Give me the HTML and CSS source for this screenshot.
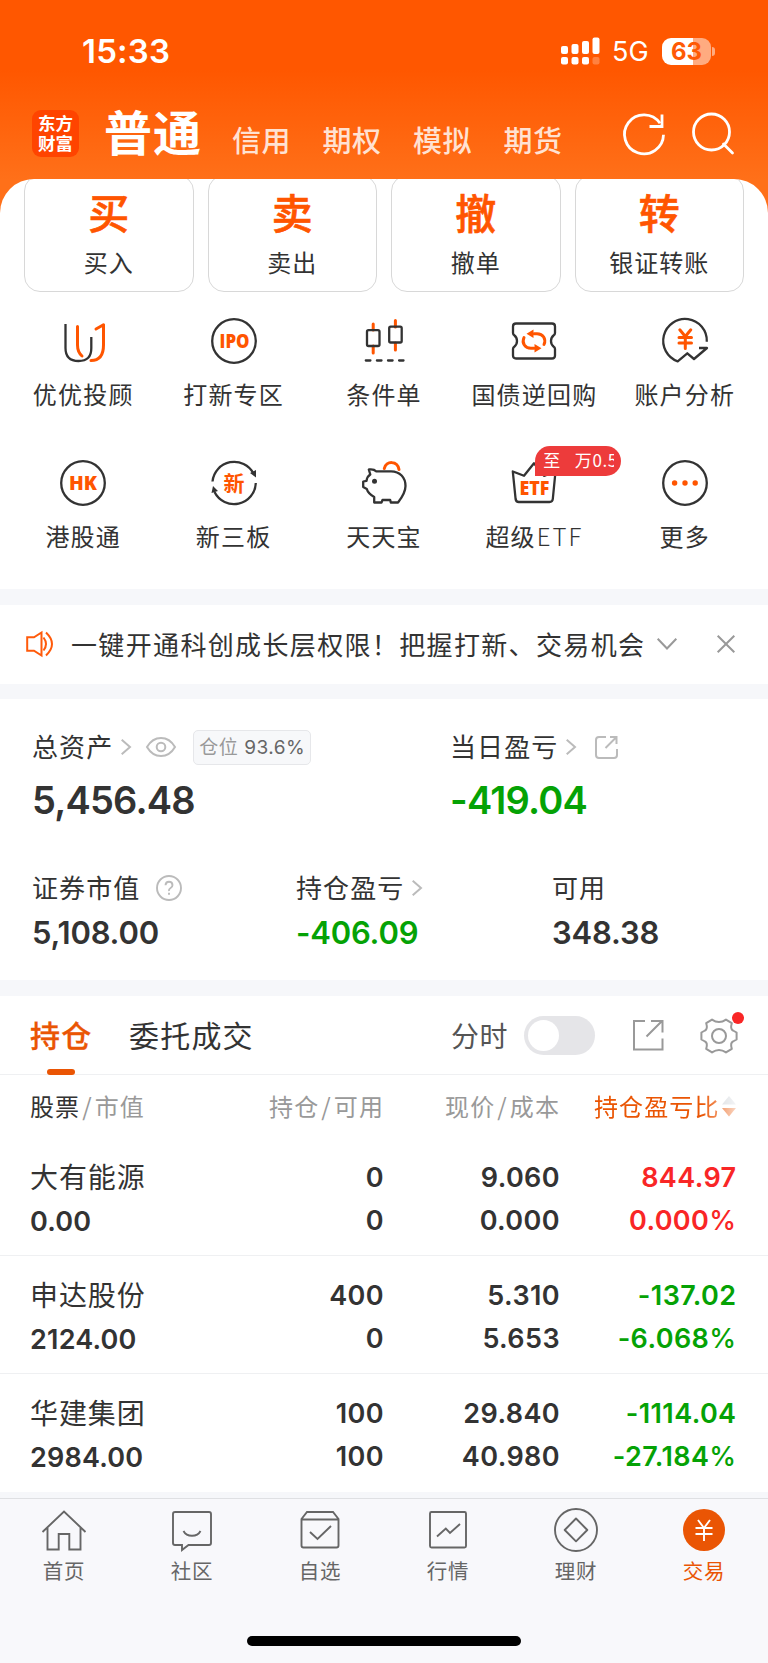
FILE: index.html
```
<!DOCTYPE html>
<html lang="zh-CN">
    <head>
        <meta charset="UTF-8">
        <title>交易</title>
        <link rel="stylesheet" href="styles.css">
    </head>
    <body>
        <header>
            <div class="status">
                <span class="time">15:33</span>
                <svg class="signal" width="39" height="28" fill="#fff">
                    <rect x="0" y="9" width="7" height="8" rx="2"/>
                    <rect x="10.5" y="7" width="7" height="10" rx="2"/>
                    <rect x="21" y="4" width="7" height="13" rx="2"/>
                    <rect x="31.5" y="0.5" width="7" height="16.5" rx="2"/>
                    <rect x="0" y="20" width="7" height="7.5" rx="2"/>
                    <rect x="10.5" y="20" width="7" height="7.5" rx="2"/>
                    <rect x="21" y="20" width="7" height="7.5" rx="2"/>
                    <rect x="31.5" y="20" width="7" height="7.5" rx="2" opacity="0.25"/>
                </svg>
                <span class="net">5G</span>
                <span class="battery">63</span>
                <span class="battery-tip"></span>
            </div>
            <div class="topbar">
                <div class="logo">东方<br>财富</div>
                <nav class="accounts">
                    <b>普通</b>
                    <span>信用</span>
                    <span>期权</span>
                    <span>模拟</span>
                    <span>期货</span>
                </nav>
                <svg class="refresh" width="44" height="44" fill="none" stroke="#fff" stroke-width="2.8">
                    <path d="M41.5 22.8A19.5 19.5 0 1 1 38 11.2"/>
                    <path d="M40 2.5V14.5H27.5"/>
                </svg>
                <svg class="search" width="44" height="44" fill="none" stroke="#fff" stroke-width="2.8">
                    <circle cx="20.5" cy="20" r="18"/>
                    <path d="M32.5 32L41.5 41" stroke-linecap="round"/>
                </svg>
            </div>
        </header>

        <main>
            <section class="panel">
                <div class="cards">
                    <div class="card"><b>买</b><span>买入</span></div>
                    <div class="card"><b>卖</b><span>卖出</span></div>
                    <div class="card"><b>撤</b><span>撤单</span></div>
                    <div class="card"><b>转</b><span>银证转账</span></div>
                </div>
                <div class="quick">
                    <div class="item">
                        <svg class="ico" viewBox="0 0 48 48">
                            <path d="M6.5 7V31Q6.5 44 19.5 44T32.3 31V20"/>
                            <path class="o" d="M18.5 9.5V28Q18.5 35 23 39"/>
                            <path class="o" d="M37 12L44.5 7.8V28Q44.5 43.5 32 43.5"/>
                        </svg>
                        <span>优优投顾</span>
                    </div>
                    <div class="item">
                        <svg class="ico" viewBox="0 0 48 48">
                            <circle cx="24" cy="24" r="21.8"/>
                            <text x="9.5" y="31.3" textLength="30" lengthAdjust="spacingAndGlyphs">IPO</text>
                        </svg>
                        <span>打新专区</span>
                    </div>
                    <div class="item">
                        <svg class="ico" viewBox="0 0 48 48">
                            <path class="o" d="M13.2 7V13M13.2 29V36M35.4 3.5V10M35.4 26V33"/>
                            <rect x="7" y="13.2" width="12.5" height="15.8" rx="1.5"/>
                            <rect x="29.2" y="9.7" width="12.5" height="15.8" rx="1.5"/>
                            <path d="M5.8 43.5H43.5" stroke-dasharray="4.6 6.5" stroke-linecap="round"/>
                        </svg>
                        <span>条件单</span>
                    </div>
                    <div class="item">
                        <svg class="ico" viewBox="0 0 48 48">
                            <path d="M6 6.5H42Q45 6.5 45 9.5V16Q45 17.5 43.5 18.5Q41 20.5 41 24T43.5 29.5Q45 30.5 45 32V38.5Q45 41.5 42 41.5H6Q3 41.5 3 38.5V32Q3 30.5 4.5 29.5Q7 27.5 7 24T4.5 18.5Q3 17.5 3 16V9.5Q3 6.5 6 6.5Z"/>
                            <path class="o" d="M14 20.5C11.5 26 15 31.3 21 31.3H24M34 27.5C36.5 22 33 16.7 27 16.7H24"/>
                            <path class="fill-o" d="M24.5 27L31.5 31.3L24.5 35.5ZM23.5 12.5L16.5 16.7L23.5 21Z"/>
                        </svg>
                        <span>国债逆回购</span>
                    </div>
                    <div class="item">
                        <svg class="ico" viewBox="0 0 48 48">
                            <path d="M45.8 24.7A21.8 21.8 0 1 0 16.7 44.3L26.3 36.3L33 42L46 31H38"/>
                            <path class="o" d="M18.8 12.8L24.3 19.5L29.8 12.8M18 20.5H30.5M18 26H30.5M24.3 20V31.5"/>
                        </svg>
                        <span>账户分析</span>
                    </div>
                    <div class="item">
                        <svg class="ico" viewBox="0 0 48 48">
                            <circle cx="24" cy="24" r="21.8"/>
                            <text x="10" y="31.3" textLength="28" lengthAdjust="spacingAndGlyphs">HK</text>
                        </svg>
                        <span>港股通</span>
                    </div>
                    <div class="item">
                        <svg class="ico" viewBox="0 0 48 48">
                            <path d="M2.5 22.5A21.8 21.8 0 0 1 43.5 14.5M45.8 24A21.8 21.8 0 0 1 4.5 33"/>
                            <path class="fill-d" d="M40 14L46 11V18.5ZM1.5 34L3 27L8 32Z"/>
                            <text x="13.5" y="32" class="cn">新</text>
                        </svg>
                        <span>新三板</span>
                    </div>
                    <div class="item">
                        <svg class="ico" viewBox="0 0 48 48">
                            <path class="o" d="M24.3 9.5C26 1.5 37.5 1.5 39 10.5"/>
                            <path d="M8.8 10.5Q14 9.8 16 12.3H31C40 12.3 45.5 18.5 45.5 27C45.5 34 41.5 39 38 43.5H30.8L30.2 41H22.5L21.5 43.5H14.2V38Q8 34.5 6.8 30L3.2 28V22.5L6.5 21.8Q7 17.5 10.3 15.5Z"/>
                            <circle class="fill-d" cx="14.5" cy="22.3" r="2.5"/>
                        </svg>
                        <span>天天宝</span>
                    </div>
                    <div class="item">
                        <svg class="ico" viewBox="0 0 48 48">
                            <path d="M2.8 12.5L14 16.8L24 4.3L34 16.8L45.5 12.5L42.8 40Q42.5 43 39.5 43H8.8Q6 43 5.6 40Z"/>
                            <text x="9.5" y="35.6" textLength="30" lengthAdjust="spacingAndGlyphs">ETF</text>
                        </svg>
                        <span>超级<i>ETF</i></span>
                        <div class="tip"><p><i>至</i>万0.5</p></div>
                    </div>
                    <div class="item">
                        <svg class="ico" viewBox="0 0 48 48">
                            <circle cx="24" cy="24" r="21.8"/>
                            <circle class="fill-o" cx="13.6" cy="24" r="2.7"/>
                            <circle class="fill-o" cx="24" cy="24" r="2.7"/>
                            <circle class="fill-o" cx="34.2" cy="24" r="2.7"/>
                        </svg>
                        <span>更多</span>
                    </div>
                </div>
            </section>

            <section class="notice">
                <svg width="28" height="26" fill="none" stroke="#ff5a0a" stroke-width="2">
                    <path d="M1.2 6.3H8L15.5 1.5V24.5L8 19.7H1.2Z"/>
                    <path d="M17.5 6.5Q22.5 13 17.5 19.5M20 1.5Q32 13 20 24.5"/>
                </svg>
                <p>一键开通科创成长层权限！把握打新、交易机会</p>
                <svg class="down" width="20" height="12" fill="none" stroke="#999" stroke-width="2"><path d="M0.7 0.7L10 10.5L19.3 0.7"/></svg>
                <svg class="close" width="18" height="18" fill="none" stroke="#999" stroke-width="2"><path d="M0.7 0.7L17.3 17.3M17.3 0.7L0.7 17.3"/></svg>
            </section>

            <section class="assets">
                <div class="total">
                    <div>
                        <div class="label">
                            总资产
                            <svg class="arrow" viewBox="0 0 10 16"><path d="M0.7 0.7L9 8L0.7 15.3"/></svg>
                            <svg class="eye" width="30" height="20" fill="none" stroke="#bbb" stroke-width="2">
                                <path d="M1 10C8-2 22-2 29 10C22 22 8 22 1 10Z"/>
                                <circle cx="15" cy="10" r="4.3"/>
                            </svg>
                            <span class="ratio">仓位 <i>93.6%</i></span>
                        </div>
                        <div class="big">5,456.48</div>
                    </div>
                    <div>
                        <div class="label">
                            当日盈亏
                            <svg class="arrow" viewBox="0 0 10 16"><path d="M0.7 0.7L9 8L0.7 15.3"/></svg>
                            <svg class="share" width="24" height="24" fill="none" stroke="#bbb" stroke-width="2">
                                <path d="M12 2H5Q2 2 2 5V20Q2 23 5 23H20Q23 23 23 20V14M11.5 13L22.5 2M16 2H22.5V9"/>
                            </svg>
                        </div>
                        <div class="big green">-419.04</div>
                    </div>
                </div>
                <div class="detail">
                    <div>
                        <div class="label">
                            证券市值
                            <svg class="help" width="26" height="26" fill="none" stroke="#bbb" stroke-width="1.9">
                                <circle cx="13" cy="13" r="12"/>
                                <path d="M9.5 10.3Q9.7 6.8 13 6.8T16.5 10.1Q16.5 12 14.6 13T13 16M13 17.8V19.8"/>
                            </svg>
                        </div>
                        <div class="mid">5,108.00</div>
                    </div>
                    <div>
                        <div class="label">
                            持仓盈亏
                            <svg class="arrow" viewBox="0 0 10 16"><path d="M0.7 0.7L9 8L0.7 15.3"/></svg>
                        </div>
                        <div class="mid green">-406.09</div>
                    </div>
                    <div>
                        <div class="label">可用</div>
                        <div class="mid">348.38</div>
                    </div>
                </div>
            </section>

            <section class="holdings">
                <div class="tabs">
                    <b class="active">持仓</b>
                    <span class="orders">委托成交</span>
                    <span class="minute">分时</span>
                    <span class="switch"></span>
                    <svg class="export" width="32" height="32" fill="none" stroke="#999" stroke-width="2">
                        <path d="M13 2H2V30.5H30.5V19.5M14.5 17.5L30 2M19 2H30.5V13.5"/>
                    </svg>
                    <div class="gear">
                        <svg width="38" height="38" fill="none" stroke="#999" stroke-width="2" stroke-linejoin="round">
                            <path d="M12 2.6Q19 7.5 26 2.6L31.8 6.2Q30 12 33 13.5L36.6 15.5V22.5L33 24.5Q30 26 31.8 31.8L26 35.4Q19 30.5 12 35.4L6.2 31.8Q8 26 5 24.5L1.4 22.5V15.5L5 13.5Q8 12 6.2 6.2Z"/>
                            <circle cx="19" cy="19" r="7"/>
                        </svg>
                        <span class="dot"></span>
                    </div>
                </div>
                <div class="row thead">
                    <div><b>股票</b><em>/</em>市值</div>
                    <div>持仓<em>/</em>可用</div>
                    <div>现价<em>/</em>成本</div>
                    <div class="sort">持仓盈亏比<svg width="16" height="22"><path d="M1 9.5L8 1L15 9.5Z" fill="#ccd0d6"/><path d="M1 13L8 21.5L15 13Z" fill="#ea5504"/></svg></div>
                </div>
                <div class="row">
                    <div><span class="name">大有能源</span><br>0.00</div>
                    <div>0<br>0</div>
                    <div>9.060<br>0.000</div>
                    <div class="red">844.97<br>0.000<i>%</i></div>
                </div>
                <div class="row">
                    <div><span class="name">申达股份</span><br>2124.00</div>
                    <div>400<br>0</div>
                    <div>5.310<br>5.653</div>
                    <div class="green">-137.02<br>-6.068<i>%</i></div>
                </div>
                <div class="row">
                    <div><span class="name">华建集团</span><br>2984.00</div>
                    <div>100<br>100</div>
                    <div>29.840<br>40.980</div>
                    <div class="green">-1114.04<br>-27.184<i>%</i></div>
                </div>
            </section>
        </main>

        <footer>
            <nav class="tabbar">
                <div>
                    <svg viewBox="0 0 48 48"><path d="M2.5 26L24 5.5L45.5 26M7.5 22V43.5H18.7V28H29.3V43.5H40.5V22"/></svg>
                    首页
                </div>
                <div>
                    <svg viewBox="0 0 48 48"><path d="M6.5 6H41Q43 6 43 8V37Q43 39 41 39H20.5L14 44V39H7Q5 39 5 37V8Q5 6 7 6M15.5 25Q18 29.8 24 29.8T32.5 25"/></svg>
                    社区
                </div>
                <div>
                    <svg viewBox="0 0 48 48"><path d="M5.5 13L11 6H37L42.5 13V39.5Q42.5 41.5 40.5 41.5H7.5Q5.5 41.5 5.5 39.5ZM5.5 13.5H42.5M14 26L21.5 33L35 20"/></svg>
                    自选
                </div>
                <div>
                    <svg viewBox="0 0 48 48"><rect x="6" y="6" width="36" height="35.5" rx="1.5"/><path d="M13 30.5L21.8 22.5L26 27L36 18"/></svg>
                    行情
                </div>
                <div>
                    <svg viewBox="0 0 48 48"><circle cx="24" cy="24" r="21"/><path d="M24 12.5L35.3 24L24 35.3L12.7 24Z" stroke-linejoin="round"/></svg>
                    理财
                </div>
                <div class="on">
                    <svg viewBox="0 0 48 48"><circle cx="24" cy="24" r="21"/><path d="M18 14L24 22L30 14M15.5 22H32.5M15.5 28H32.5M24 22V35"/></svg>
                    交易
                </div>
            </nav>
            <div class="homebar"></div>
        </footer>
    </body>
</html>
```
FILE: styles.css
```
* {
    box-sizing: border-box;
}

body {
    margin: 0;
    width: 768px;
    height: 1663px;
    overflow: hidden;
    display: flex;
    flex-direction: column;
    font-family: Inter, "Noto Sans CJK SC", sans-serif;
    color: #333;
    background: linear-gradient(#ff5700 70px, #ff7019 180px, #ff7019 230px, #f6f7fa 231px);
}

svg {
    display: block;
    flex: none;
    overflow: visible;
}

p {
    margin: 0;
}

b, i, em {
    font-style: normal;
}

/* header */
header {
    height: 179px;
    color: white;
}

.status {
    display: flex;
    align-items: center;
    height: 102px;
    padding-left: 82px;
}

.time {
    width: 479px;
    font-size: 33px;
    font-weight: 600;
    letter-spacing: 0.2px;
}

.net {
    margin-left: 12px;
    width: 50px;
    font-size: 27px;
    padding-top: 1px;
}

.battery {
    width: 49px;
    height: 27px;
    border-radius: 9px;
    background: linear-gradient(90deg, #fff 63%, #ffab80 63%);
    color: #ff5a05;
    font-size: 24px;
    font-weight: 700;
    line-height: 27px;
    text-align: center;
}

.battery-tip {
    width: 3px;
    height: 9px;
    margin-left: 1px;
    border-radius: 0 4px 4px 0;
    background: #ffab80;
}

.topbar {
    display: flex;
    height: 77px;
    padding: 8px 0 0 32px;
}

.logo {
    width: 47px;
    height: 47px;
    border-radius: 9px;
    background: #ff4400;
    font-size: 17.5px;
    font-weight: 700;
    line-height: 19.5px;
    padding-top: 4px;
    text-align: center;
}

.accounts {
    display: flex;
    align-items: baseline;
    width: 510px;
    margin-left: 25px;
    height: 60px;
    line-height: 48px;
}

.accounts b {
    font-size: 48px;
    font-weight: 700;
    letter-spacing: 1px;
    width: 128px;
}

.accounts span {
    position: relative;
    top: 1px;
    width: 90.5px;
    font-size: 29px;
    font-weight: 500;
    letter-spacing: 0.6px;
    color: rgba(255, 255, 255, 0.82);
}

.refresh {
    margin: 2px 0 0 8px;
}

.search {
    margin: 2px 0 0 25px;
}

/* trade entries */
.panel {
    height: 410px;
    overflow: hidden;
    border-radius: 34px 34px 0 0;
    background: white;
}

.cards {
    display: grid;
    grid-template-columns: repeat(4, 1fr);
    gap: 14px;
    padding: 0 24px;
    margin-top: -4px;
}

.card {
    height: 117px;
    border: 1.5px solid #d8d8d8;
    border-radius: 16px;
    display: flex;
    flex-direction: column;
    align-items: center;
}

.card b {
    margin-top: 15px;
    font-size: 41px;
    line-height: 46px;
    font-weight: 500;
    color: #ff5500;
    -webkit-text-stroke: 0.6px #ff5500;
}

.card span {
    margin-top: 11px;
    font-size: 24px;
    line-height: 32px;
    letter-spacing: 1px;
}

.quick {
    display: grid;
    grid-template-columns: repeat(5, 1fr);
    grid-auto-rows: 142px;
    padding: 25px 8px 0 8px;
}

.item {
    position: relative;
    display: flex;
    flex-direction: column;
    align-items: center;
    font-family: "Noto Sans CJK SC", sans-serif;
    font-size: 24px;
    line-height: 34px;
    letter-spacing: 1.2px;
}

.item span {
    margin-top: 12px;
}

.item span i {
    margin-left: 1px;
    letter-spacing: 2px;
    font-weight: 300;
}

.ico {
    width: 48px;
    height: 48px;
    fill: none;
    stroke: #333;
    stroke-width: 2.3;
    stroke-linejoin: round;
}

.ico .o {
    stroke: #ff5500;
    stroke-width: 3;
    stroke-linecap: round;
}

.ico .fill-o, .ico text {
    fill: #ff5500;
    stroke: none;
}

.ico .fill-d {
    fill: #333;
    stroke: none;
}

.ico text {
    font: 800 20px "Open Sans", sans-serif;
    letter-spacing: 0;
}

.ico .cn {
    font: 700 21px "Noto Sans CJK SC", sans-serif;
}

.tip {
    position: absolute;
    left: 76px;
    top: -13px;
    width: 86px;
    height: 30px;
    padding-left: 8px;
    border-radius: 15px 15px 15px 0;
    background: #ed3b3b;
    color: white;
}

.tip p {
    width: 71px;
    overflow: hidden;
    white-space: nowrap;
    font-size: 17px;
    line-height: 28px;
    letter-spacing: 0.6px;
}

.tip i {
    margin-right: 14px;
}

/* notice */
.notice {
    display: flex;
    align-items: center;
    height: 79px;
    margin-top: 16px;
    padding: 0 32px 1px 26px;
    background: white;
}

.notice p {
    margin-left: 17px;
    width: 586px;
    padding-bottom: 2px;
    font-size: 26px;
    letter-spacing: 1.35px;
    white-space: nowrap;
}

.close {
    margin-left: 40px;
}

/* assets */
.assets {
    height: 281px;
    margin-top: 15px;
    padding: 27px 32px 0 32px;
    background: white;
}

.total, .detail {
    display: grid;
    grid-template-columns: 418px 1fr;
    height: 141px;
}

.detail {
    grid-template-columns: 264px 256px 1fr;
}

.label {
    display: flex;
    align-items: center;
    height: 42px;
    padding-bottom: 4px;
    font-size: 26px;
    letter-spacing: 1.1px;
}

.label svg, .ratio {
    margin-top: 4px;
}

.arrow {
    width: 10px;
    height: 16px;
    margin-left: 8px;
    fill: none;
    stroke: #bbb;
    stroke-width: 2;
}

.eye {
    margin-left: 15px;
}

.ratio {
    margin-left: 17px;
    width: 118px;
    height: 35px;
    border: 1.5px solid #e6e7ea;
    border-radius: 5px;
    background: #f7f8fa;
    color: #999;
    font-size: 19px;
    line-height: 33px;
    text-align: center;
    letter-spacing: 0.5px;
    white-space: nowrap;
}

.ratio i {
    color: #666;
}

.share {
    margin-left: 18px;
}

.help {
    margin-left: 16px;
}

.big, .mid, .row {
    font-feature-settings: "calt" 0;
}

.big {
    margin-top: 9px;
    font-size: 38px;
    font-weight: 600;
    line-height: 46px;
    letter-spacing: -0.8px;
}

.mid {
    margin-top: 4px;
    font-size: 31px;
    font-weight: 600;
    line-height: 40px;
    letter-spacing: -0.2px;
}

.green {
    color: #05a205;
}

.red {
    color: #f92626;
}

/* holdings */
.holdings {
    height: 496px;
    margin-top: 16px;
    background: white;
}

.tabs {
    display: flex;
    align-items: center;
    height: 79px;
    padding: 0 30px;
    border-bottom: 1px solid #eff0f2;
    font-size: 30px;
    letter-spacing: 1.2px;
}

.active, .orders {
    padding-bottom: 2px;
}

.active {
    position: relative;
    width: 99px;
    font-weight: 500;
    color: #ea5504;
    -webkit-text-stroke: 0.3px #ea5504;
}

.active::after {
    content: "";
    position: absolute;
    left: 17px;
    bottom: -17px;
    width: 28px;
    height: 6px;
    border-radius: 3px;
    background: #ea5504;
}

.orders {
    width: 322px;
}

.minute {
    width: 73px;
    font-size: 28px;
    letter-spacing: 0.5px;
    color: #555;
}

.switch {
    width: 71px;
    height: 39px;
    margin-top: 1px;
    padding: 4px;
    border-radius: 20px;
    background: #e5e5e8;
}

.switch::before {
    content: "";
    display: block;
    width: 31px;
    height: 31px;
    border-radius: 50%;
    background: white;
}

.export {
    margin-left: 37px;
}

.gear {
    position: relative;
    margin-left: 36px;
    margin-top: 1px;
}

.dot {
    position: absolute;
    right: -6px;
    top: -5px;
    width: 12px;
    height: 12px;
    border-radius: 50%;
    background: #f92626;
}

.row {
    display: grid;
    grid-template-columns: 180px 174px 176px 176.5px;
    height: 118px;
    padding: 19px 0 0 30px;
    border-bottom: 1px solid #eff0f2;
    font-size: 27px;
    font-weight: 600;
    line-height: 42.5px;
    letter-spacing: 0.4px;
    text-align: right;
}

.row div:first-child {
    text-align: left;
    letter-spacing: 0.2px;
}

.row i {
    font-weight: 500;
    font-size: 27px;
}

.row:last-child {
    border-bottom: none;
}

.row .name {
    font-size: 28px;
    font-weight: 400;
    letter-spacing: 0.9px;
}

.thead {
    height: 63px;
    padding-top: 10px;
    border-bottom: none;
    color: #999;
    font-family: "Noto Sans CJK SC", sans-serif;
    font-size: 24px;
    font-weight: 400;
}

.row.thead div {
    letter-spacing: 1.1px;
}

.thead b {
    color: #333;
    font-weight: 400;
}

.thead em {
    margin: 0 2px;
}

.thead .sort {
    display: flex;
    justify-content: flex-end;
    align-items: center;
    height: 42px;
    color: #ea5504;
    white-space: nowrap;
    -webkit-mask-image: linear-gradient(90deg, #000 142px, rgba(0, 0, 0, 0.2) 178px);
    mask-image: linear-gradient(90deg, #000 142px, rgba(0, 0, 0, 0.2) 178px);
}

.sort svg {
    margin-left: 1px;
}

/* bottom tab bar */
footer {
    flex: 1;
    margin-top: 6px;
    border-top: 1px solid #dfe0e3;
    background: #f8f8fb;
}

.tabbar {
    display: grid;
    grid-template-columns: repeat(6, 1fr);
    padding-top: 7px;
}

.tabbar div {
    display: flex;
    flex-direction: column;
    align-items: center;
    font-size: 20.5px;
    line-height: 36px;
    letter-spacing: 0.8px;
    color: #666;
}

.tabbar svg {
    width: 48px;
    height: 48px;
    fill: none;
    stroke: #666;
    stroke-width: 1.9;
}

.tabbar .on {
    color: #ea5504;
}

.on circle {
    fill: #ea5504;
    stroke: none;
}

.on path {
    stroke: white;
}

.homebar {
    width: 274px;
    height: 10px;
    margin: 46px auto 0;
    border-radius: 5px;
    background: black;
}
```
